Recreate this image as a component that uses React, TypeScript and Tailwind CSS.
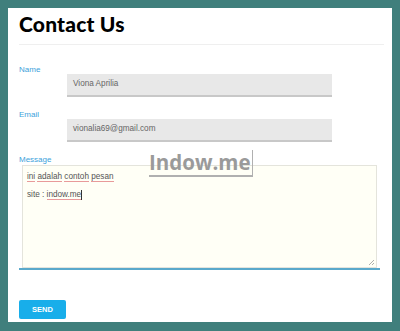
import React from "react";

const sans = { fontFamily: '"Liberation Sans", Arial, sans-serif' };

function Wavy({ children }: { children: React.ReactNode }) {
  return (
    <span className="inline-block leading-[9px] border-b border-[#e89a9a]">
      {children}
    </span>
  );
}

export default function App() {
  return (
    <div className="relative w-[400px] h-[331px] bg-[#407f7c] pt-[8px] px-[8px] pb-[9px] overflow-hidden">
      <div className="w-full h-full bg-white flex flex-col pl-[11px] pr-[8px]" style={sans}>
        <div
          className="h-[36px] pt-[5px] text-[21px] leading-[21px] font-black text-black tracking-[0.2px]"
          style={{ fontFamily: 'Lato, "Open Sans", sans-serif' }}
        >
          Contact Us
        </div>
        <div className="h-[1px] bg-[#efefef]" />

        <div className="mt-[21px] h-[8px] leading-[8px] text-[8px] text-[#3d9fdb]">Name</div>
        <div className="ml-[48px] w-[265px] h-[23px] bg-[#e8e8e8] border-b-2 border-[#c8c8c8] flex items-center pl-[6px] text-[8.2px] text-[#666]">
          Viona Aprilia
        </div>

        <div className="mt-[14px] h-[8px] leading-[8px] text-[8px] text-[#3d9fdb]">Email</div>
        <div className="ml-[48px] w-[265px] h-[23px] bg-[#e8e8e8] border-b-2 border-[#c8c8c8] flex items-center pl-[6px] text-[8.2px] text-[#666]">
          vionalia69@gmail.com
        </div>

        <div className="mt-[14px] h-[8px] leading-[8px] text-[8px] text-[#3d9fdb]">Message</div>
        <div className="relative mt-[1px] ml-[3px] w-[355px] h-[103px] bg-[#fffff6] border border-[#e4e4dc] pt-[2px] pl-[4px] text-[8.2px] leading-[18px] text-[#555]">
          <div>
            <Wavy>ini</Wavy> <Wavy>adalah</Wavy> <Wavy>contoh</Wavy> <Wavy>pesan</Wavy>
          </div>
          <div className="flex items-center">
            <span>site :&nbsp;</span>
            <Wavy>indow.me</Wavy>
            <span className="inline-block w-[1px] h-[10px] bg-[#333]" />
          </div>
          <svg className="absolute right-[1px] bottom-[1px]" width="7" height="7" viewBox="0 0 7 7">
            <line x1="6" y1="1" x2="1" y2="6" stroke="#999" strokeWidth="0.8" />
            <line x1="6" y1="4" x2="4" y2="6" stroke="#999" strokeWidth="0.8" />
          </svg>
        </div>
        <div className="w-[361px] h-[2px] bg-[#5aa9cb]" />

        <div className="mt-[30px] w-[47px] h-[19px] rounded-[2px] bg-[#18aeea] flex items-center justify-center text-[7.5px] font-bold text-white">
          SEND
        </div>
      </div>

      <div
        className="absolute left-[149px] top-[150px] text-[20.5px] leading-[24px] font-bold text-[#9a9a9a] border-b-2 border-r border-[#b0b0b0] pr-[1px] pb-[1px]"
        style={{ fontFamily: '"Open Sans", "Noto Sans", sans-serif' }}
      >
        Indow.me
      </div>
    </div>
  );
}
